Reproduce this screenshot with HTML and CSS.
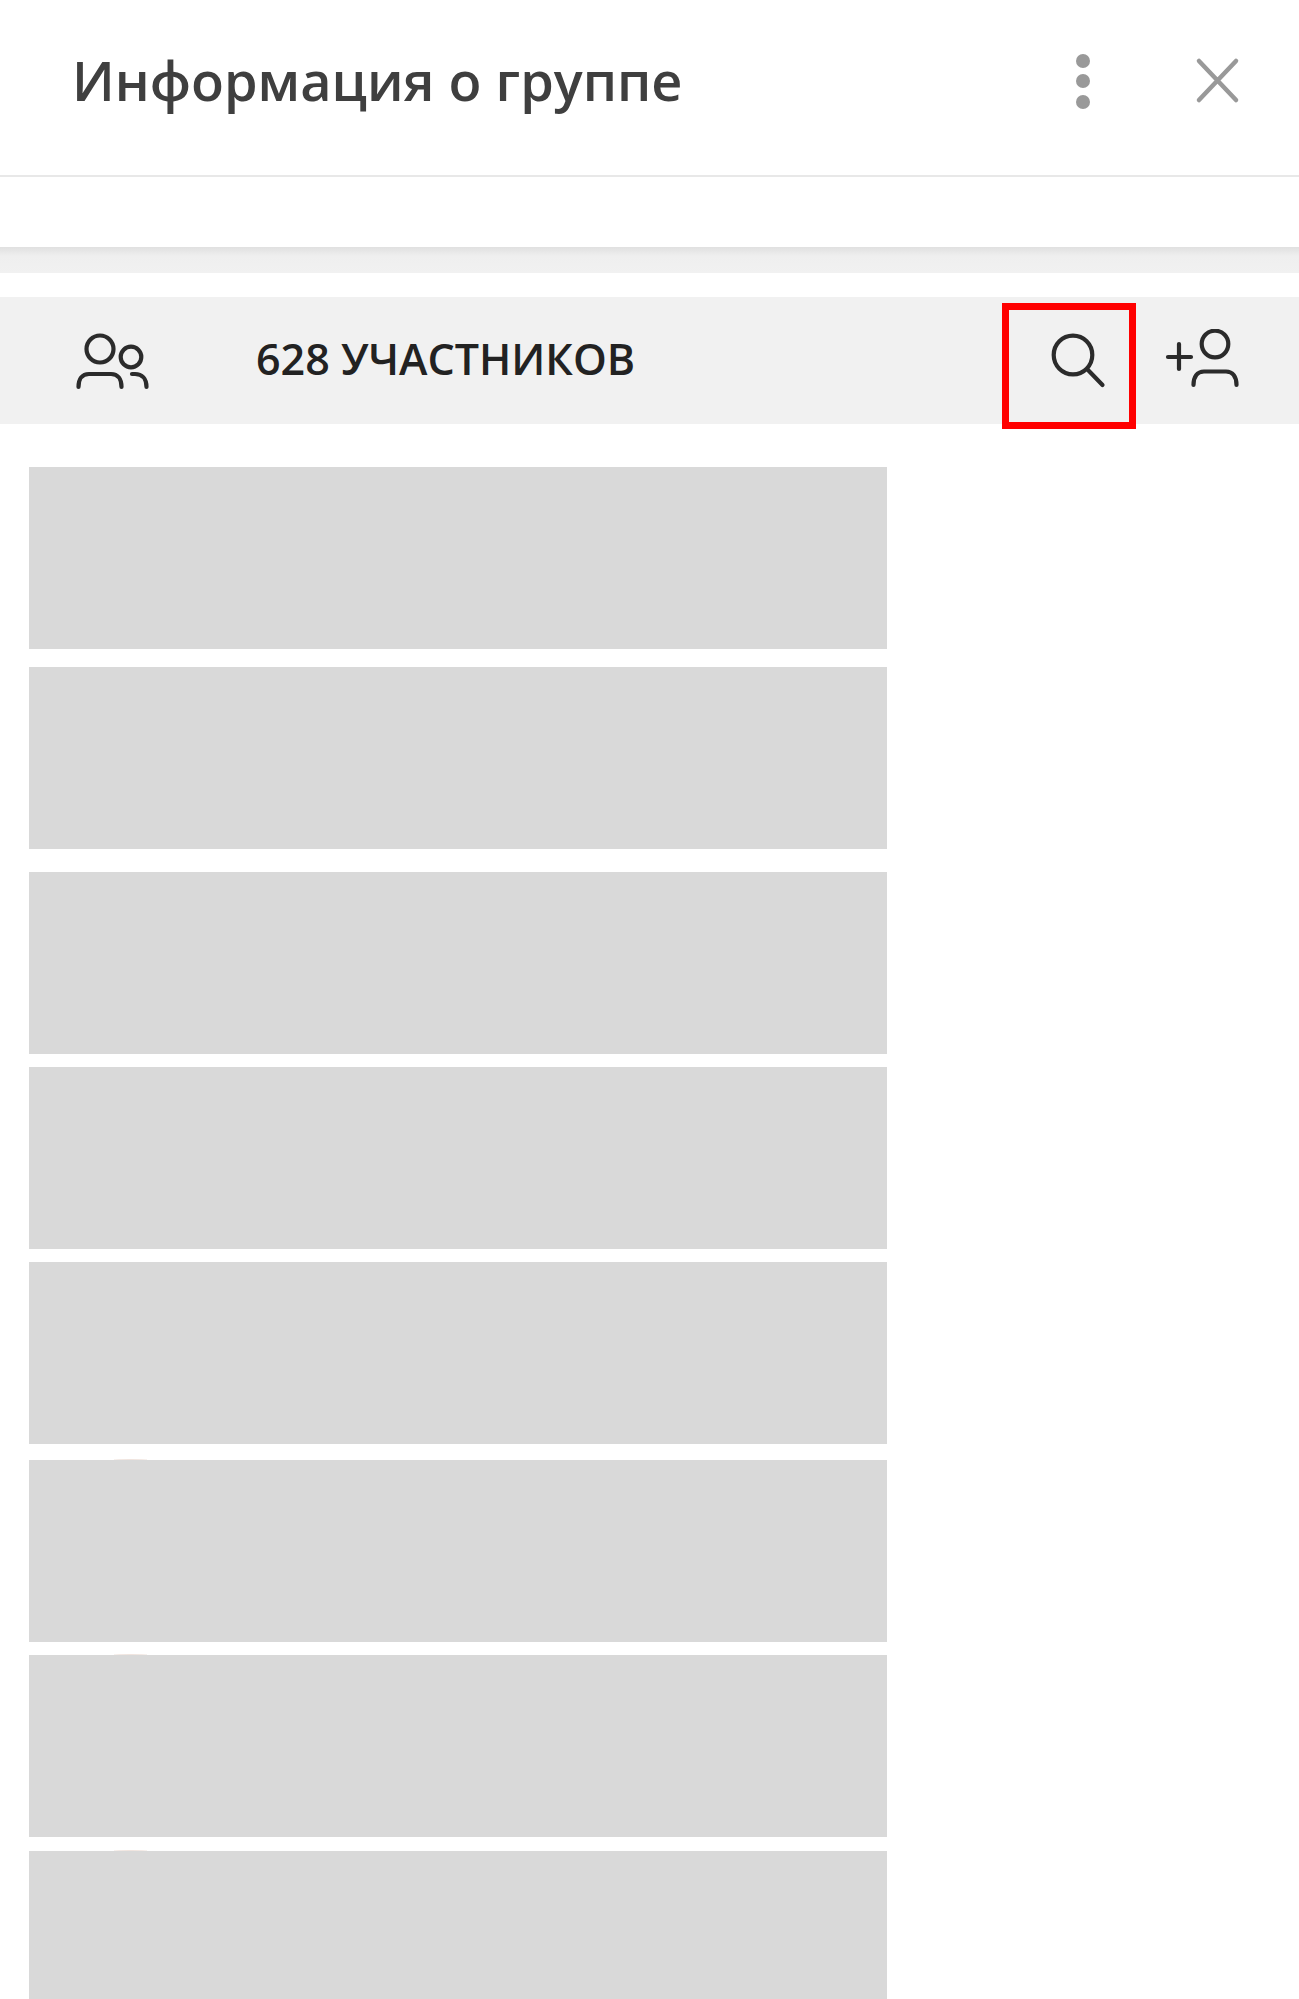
FILE: index.html
```html
<!DOCTYPE html>
<html lang="ru">
<head>
  <meta charset="UTF-8">
  <meta name="viewport" content="width=device-width, initial-scale=1.0">
  <title>Информация о группе</title>
  <link rel="stylesheet" href="styles.css">
</head>
<body>
  <!-- Header -->
  <header class="header">
    <h1 class="title">Информация о группе</h1>
    <svg class="icon-dots" viewBox="0 0 20 60" aria-hidden="true">
      <circle cx="10" cy="10" r="7"/>
      <circle cx="10" cy="30" r="7"/>
      <circle cx="10" cy="51" r="7"/>
    </svg>
    <svg class="icon-close" viewBox="0 0 55 55" aria-hidden="true">
      <path d="M9 8 L46 47 M46 8 L9 47"/>
    </svg>
  </header>

  <div class="spacer"></div>
  <div class="shade"></div>

  <!-- Members bar -->
  <div class="members-bar">
    <svg class="icon icon-people" viewBox="0 0 76 64" aria-hidden="true">
      <circle cx="26" cy="20" r="13.5"/>
      <circle cx="57" cy="28" r="10.3"/>
      <path d="M4.5 58 C4.5 50 8 45 15 45 H37 C44 45 47.5 50 47.5 58"/>
      <path d="M58 45 H61 C68 45 72.5 50 72.5 58"/>
    </svg>
    <span class="members-count">628 УЧАСТНИКОВ</span>
    <svg class="icon icon-search" viewBox="0 0 60 64" aria-hidden="true">
      <circle cx="25" cy="26" r="19.3"/>
      <path d="M40 41 L54.5 56"/>
    </svg>
    <svg class="icon icon-add" viewBox="0 0 84 64" aria-hidden="true">
      <path d="M8 28 H31 M19 15 V40"/>
      <circle cx="55" cy="15" r="13.3"/>
      <path d="M33.5 56 C33.5 48 37 42.5 44 42.5 H66 C73 42.5 76.5 48 76.5 56"/>
    </svg>
    <div class="highlight"></div>
  </div>

  <!-- Hidden member rows -->
  <div class="member-list">
    <div class="member gap-18"></div>
    <div class="member gap-23"></div>
    <div class="member"></div>
    <div class="member"></div>
    <div class="member gap-16"></div>
    <div class="member residue"></div>
    <div class="member residue gap-14"></div>
    <div class="member residue"></div>
  </div>
</body>
</html>
```

FILE: styles.css
```css
/* General reset */
* {
  margin: 0;
  padding: 0;
  box-sizing: border-box;
}

body {
  font-family: 'Open Sans', 'Noto Sans', sans-serif;
  background: #fff;
  color: #333;
  height: 1999px;
  overflow: hidden;
}

.header {
  display: flex;
  align-items: center;
  height: 177px;
  padding: 0 54px 14px 72px;
  border-bottom: 2px solid #e8e8e8;
}

.title {
  flex: 1;
  margin-bottom: 2px;
  font-size: 54px;
  font-weight: 600;
  color: #3f3f3f;
}

.icon-dots {
  width: 20px;
  height: 60px;
  fill: #999;
}

.icon-close {
  width: 55px;
  height: 55px;
  margin-left: 97px;
  fill: none;
  stroke: #999;
  stroke-width: 4.5;
  stroke-linecap: round;
}

.spacer {
  height: 70px;
}

.shade {
  height: 26px;
  background: linear-gradient(#e0e0e0, #efefef 35%, #f1f1f1);
}

.members-bar {
  position: relative;
  display: flex;
  align-items: center;
  height: 127px;
  margin-top: 24px;
  padding: 0 55px 0 74px;
  background: #f1f1f1;
}

.members-count {
  flex: 1;
  margin-left: 106px;
  margin-bottom: 4px;
  font-size: 43px;
  font-weight: 600;
  color: #222;
}

.icon {
  height: 64px;
  fill: none;
  stroke: #2b2b2b;
  stroke-width: 4.2;
  stroke-linecap: round;
}

.icon-people {
  width: 76px;
}

.icon-search {
  width: 60px;
}

.icon-add {
  width: 84px;
  margin-left: 52px;
}

/* Red marker over the search button */
.highlight {
  position: absolute;
  top: 6px;
  right: 163px;
  width: 134px;
  height: 126px;
  border: 7px solid #f00;
}

.member-list {
  padding: 43px 0 0 29px;
}

.member {
  position: relative;
  width: 858px;
  height: 182px;
  margin-bottom: 13px;
  background: #d9d9d9;
}

.gap-14 {
  margin-bottom: 14px;
}

.gap-16 {
  margin-bottom: 16px;
}

.gap-18 {
  margin-bottom: 18px;
}

.gap-23 {
  margin-bottom: 23px;
}

/* Faint edge left over above some rows */
.residue::before {
  content: "";
  position: absolute;
  top: -1px;
  left: 85px;
  width: 33px;
  height: 1px;
  border-radius: 50% 50% 0 0;
  background: #f0e4de;
}
```
